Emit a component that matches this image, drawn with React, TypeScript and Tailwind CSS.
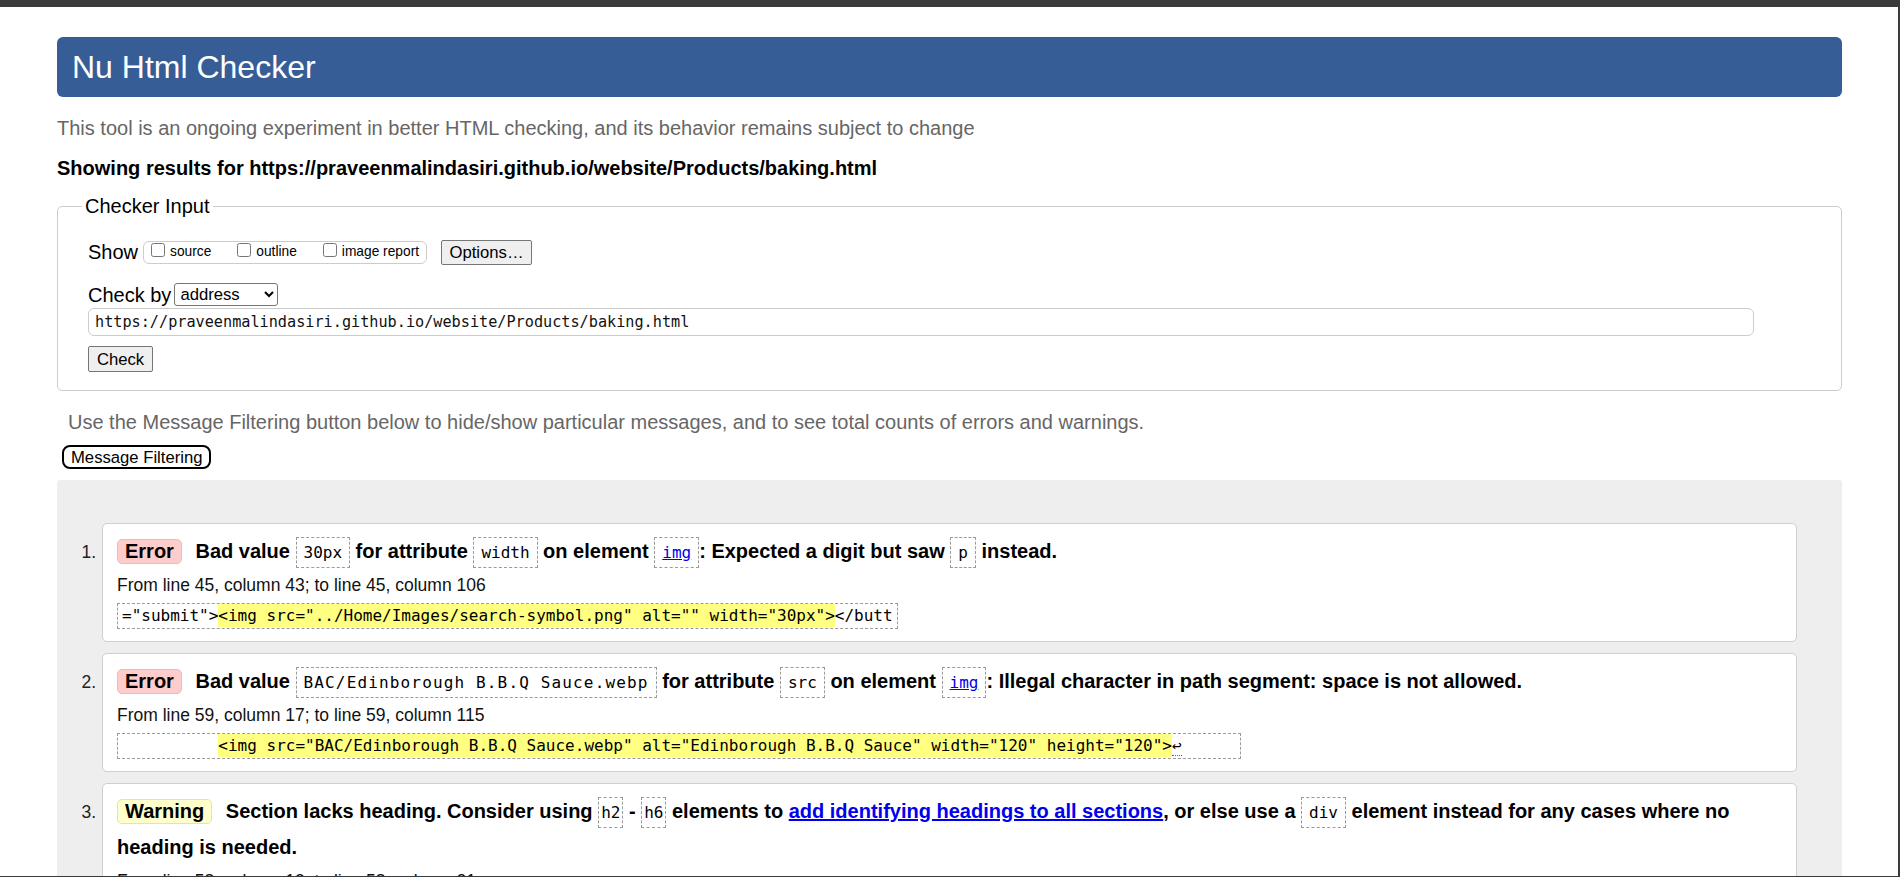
import React from "react";

// Nu Html Checker result page, screenshot at 1900x877

type Part = string | { code: string; link?: boolean; tight?: boolean; wide?: boolean } | { href: string };

type Msg = {
  kind: "Error" | "Warning";
  parts: Part[];
  where: string;
  before: string;
  mark: string;
  after: string;
  lf?: boolean;
};

const messages: Msg[] = [
  {
    kind: "Error",
    parts: [
      "Bad value ",
      { code: "30px" },
      " for attribute ",
      { code: "width" },
      " on element ",
      { code: "img", link: true },
      ": Expected a digit but saw ",
      { code: "p" },
      " instead.",
    ],
    where: "From line 45, column 43; to line 45, column 106",
    before: '="submit">',
    mark: '<img src="../Home/Images/search-symbol.png" alt="" width="30px">',
    after: "</butt",
  },
  {
    kind: "Error",
    parts: [
      "Bad value ",
      { code: "BAC/Edinborough B.B.Q Sauce.webp", wide: true },
      " for attribute ",
      { code: "src" },
      " on element ",
      { code: "img", link: true },
      ": Illegal character in path segment: space is not allowed.",
    ],
    where: "From line 59, column 17; to line 59, column 115",
    before: "          ",
    mark: '<img src="BAC/Edinborough B.B.Q Sauce.webp" alt="Edinborough B.B.Q Sauce" width="120" height="120">',
    after: "",
    lf: true,
  },
  {
    kind: "Warning",
    parts: [
      "Section lacks heading. Consider using ",
      { code: "h2", tight: true },
      " - ",
      { code: "h6", tight: true },
      " elements to ",
      { href: "add identifying headings to all sections" },
      ", or else use a ",
      { code: "div" },
      " element instead for any cases where no heading is needed.",
    ],
    where: "From line 58, column 13; to line 58, column 21",
    before: "",
    mark: "<section>",
    after: "",
  },
];

function Code({ text, link, tight, wide }: { text: string; link?: boolean; tight?: boolean; wide?: boolean }) {
  const pad = tight ? "px-[2px]" : "px-[7px]";
  const track = wide ? "tracking-[1.15px]" : "";
  return (
    <code
      className={`inline-block border border-dashed border-[#9a9a9a] ${pad} ${track} font-['DejaVu_Sans_Mono',monospace] text-[16px] font-normal leading-[29px] whitespace-pre`}
    >
      {link ? <a className="text-[#0000ee] underline">{text}</a> : text}
    </code>
  );
}

function Badge({ kind }: { kind: Msg["kind"] }) {
  return kind === "Error" ? (
    <span className="mr-[8px] inline-block rounded-[5px] border border-[#f2b8b8] bg-[#ffcccc] px-[7px] leading-[23px]">Error</span>
  ) : (
    <span className="mr-[8px] inline-block rounded-[5px] border border-[#e4e4a6] bg-[#ffffcc] px-[7px] leading-[23px]">Warning</span>
  );
}

function Message({ m, n }: { m: Msg; n: number }) {
  return (
    <li className="mb-[11px] flex items-baseline">
      <span className="w-[45px] shrink-0 pr-[6px] text-right text-[17.5px] text-[#222]">{n}.</span>
      <div className="min-w-0 flex-1 rounded-[5px] border border-[#cfcfcf] bg-white px-[14px] pt-[9px] pb-[12px]">
        <p className="text-[20px] font-bold leading-[36px]">
          <Badge kind={m.kind} />{" "}
          {m.parts.map((p, i) =>
            typeof p === "string" ? (
              <React.Fragment key={i}>{p}</React.Fragment>
            ) : "code" in p ? (
              <Code key={i} text={p.code} link={p.link} tight={p.tight} wide={p.wide} />
            ) : (
              <a key={i} className="text-[#0000ee] underline">
                {p.href}
              </a>
            )
          )}
        </p>
        <p className="mt-[6px] text-[17.5px] leading-[20px] text-[#111]">{m.where}</p>
        <div className="mt-[8px] flex">
          <div className="h-[26px] border border-dashed border-[#9a9a9a] px-[4px] font-['DejaVu_Sans_Mono',monospace] text-[16px] leading-[24px] whitespace-pre">
            {m.before}
            <span className="bg-[#ffff80] py-[2px]">{m.mark}</span>
            {m.after}
            {m.lf && (
              <>
                <span className="border-b border-dotted border-[#666]">↩</span>
                <span className="pr-[6px]">{"     "}</span>
              </>
            )}
          </div>
        </div>
      </div>
    </li>
  );
}

export default function App() {
  return (
    <div className="h-[877px] overflow-hidden border-t-[7px] border-r-2 border-b border-[#3b3b3b] bg-white font-['Liberation_Sans',Arial,sans-serif] text-black">
      <div className="pl-[57px] pr-[56px]">
        <h1 className="mt-[30px] flex h-[60px] items-center rounded-[6px] bg-[#365d95] pl-[15px] text-[32px] font-normal text-white">
          Nu Html Checker
        </h1>
        <p className="mt-[20px] text-[20px] leading-[23px] text-[#666]">
          This tool is an ongoing experiment in better HTML checking, and its behavior remains subject to change
        </p>
        <p className="mt-[17px] text-[20px] font-bold leading-[23px]">
          Showing results for https://praveenmalindasiri.github.io/website/Products/baking.html
        </p>

        <fieldset className="mt-[14px] rounded-[5px] border border-[#cccccc] pr-[87px] pb-[18px] pl-[30px]">
          <legend className="-ml-[6px] px-[3px] text-[20px] leading-[24px]">Checker Input</legend>

          <div className="mt-[21px] flex h-[26px] items-center">
            <span className="text-[20px]">Show</span>
            <div className="ml-[5px] flex h-[23px] items-center gap-[26px] rounded-[6px] border border-[#cccccc] px-[7px] text-[13.75px]">
              <label className="flex items-center gap-[5px]">
                <input type="checkbox" className="m-0 mb-[5px] h-[14px] w-[14px]" />
                source
              </label>
              <label className="flex items-center gap-[5px]">
                <input type="checkbox" className="m-0 mb-[5px] h-[14px] w-[14px]" />
                outline
              </label>
              <label className="flex items-center gap-[5px]">
                <input type="checkbox" className="m-0 mb-[5px] h-[14px] w-[14px]" />
                image report
              </label>
            </div>
            <button className="ml-[14px] flex h-[25px] w-[91px] items-center justify-center rounded-[2px] border border-[#767676] bg-[#efefef] text-[16.67px]">
              Options…
            </button>
          </div>

          <div className="mt-[18px] flex h-[23px] items-center">
            <span className="text-[20px]">Check by</span>
            <select className="ml-[3px] h-[23px] w-[104px] rounded-[3px] border border-[#767676] bg-white px-[1px] text-[16.67px]">
              <option>address</option>
            </select>
          </div>

          <input
            readOnly
            defaultValue="https://praveenmalindasiri.github.io/website/Products/baking.html"
            className="mt-[2px] block h-[28px] w-full rounded-[6px] border border-[#cccccc] pl-[6px] font-['DejaVu_Sans_Mono',monospace] text-[15.2px] text-[#111]"
          />

          <button className="mt-[10px] flex h-[26px] w-[65px] items-center justify-center rounded-[2px] border border-[#767676] bg-[#efefef] text-[16.67px]">
            Check
          </button>
        </fieldset>

        <p className="mt-[20px] pl-[11px] text-[20px] leading-[23px] text-[#666]">
          Use the Message Filtering button below to hide/show particular messages, and to see total counts of errors and warnings.
        </p>
        <button className="mt-[11px] ml-[5px] flex h-[24px] items-center rounded-[8px] border-2 border-black bg-white px-[7px] text-[16.67px]">
          Message Filtering
        </button>

        <div className="mt-[11px] rounded-[3px] bg-[#eeeeee] pt-[43px] pr-[45px]">
          <ol>
            {messages.map((m, i) => (
              <Message key={i} m={m} n={i + 1} />
            ))}
          </ol>
        </div>
      </div>
    </div>
  );
}
